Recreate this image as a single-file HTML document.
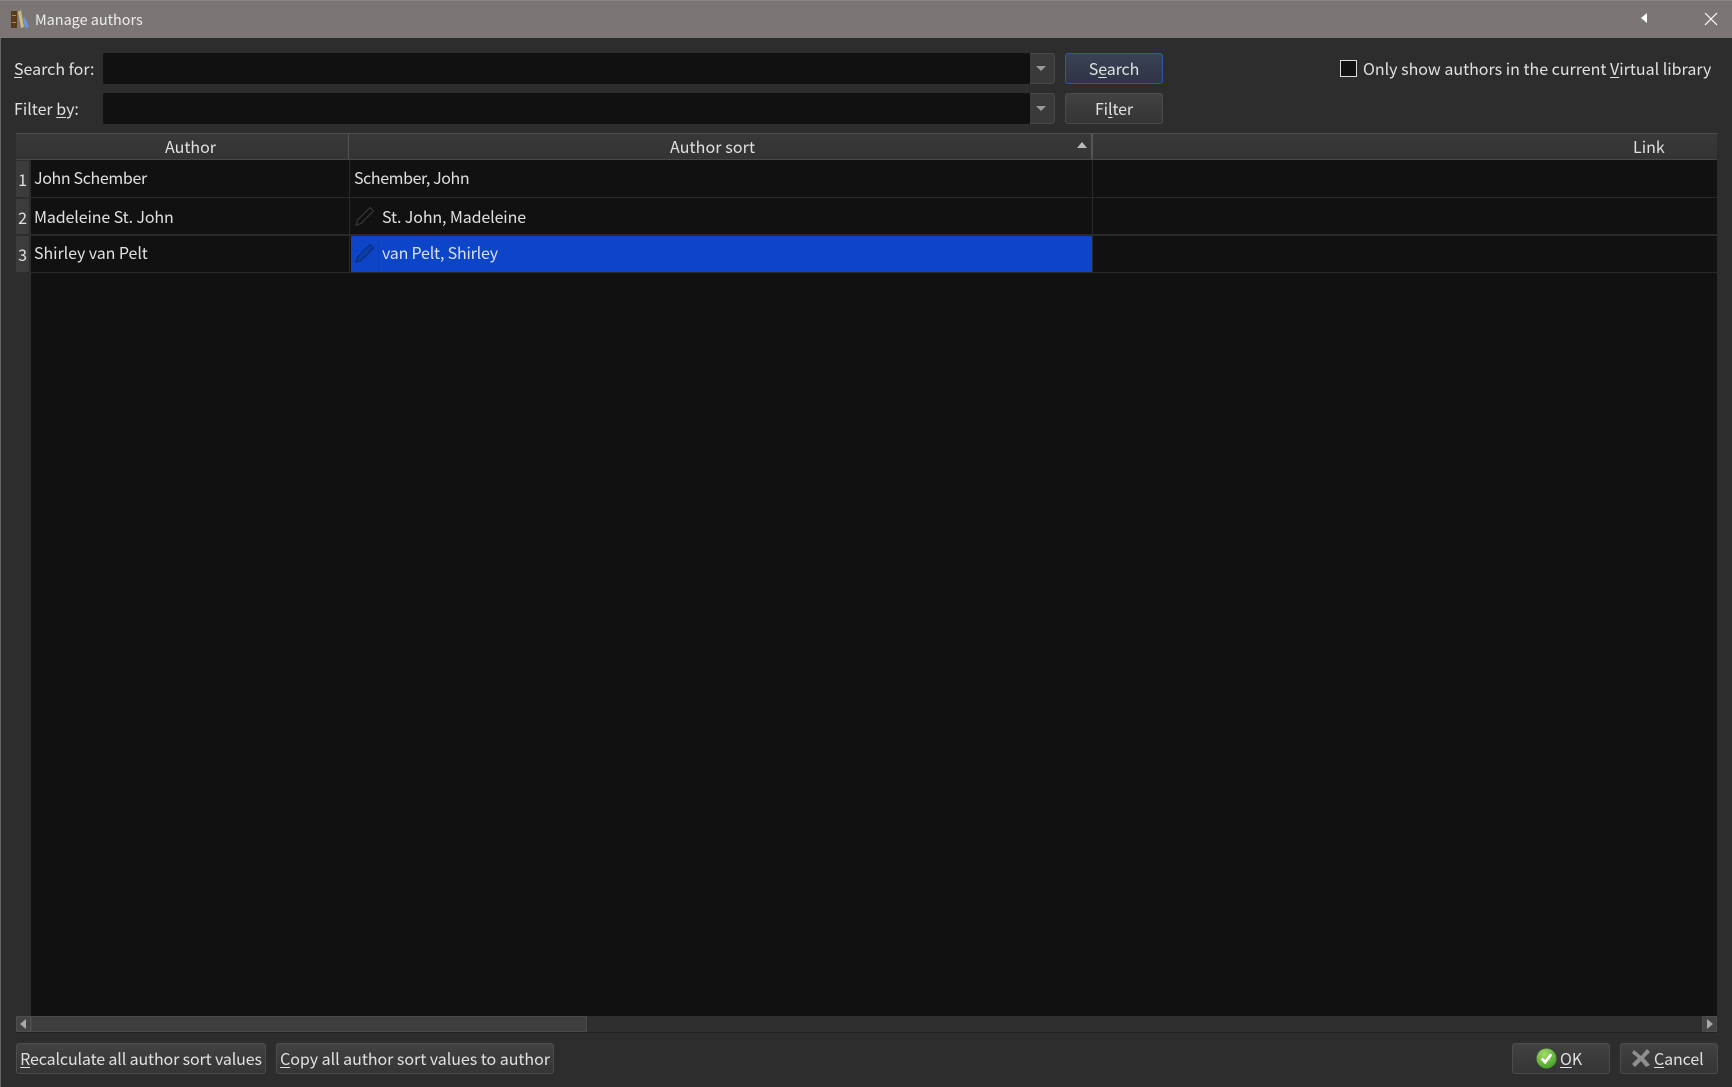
<!DOCTYPE html>
<html><head><meta charset="utf-8"><title>Manage authors</title>
<style>
html,body{margin:0;padding:0;background:#2d2d2d}
body{width:1732px;height:1087px;overflow:hidden;position:relative;font-family:"Noto Sans CJK JP","Liberation Sans",sans-serif;font-size:16px;color:#e0e0e0}
.a{position:absolute}
.t{position:absolute;white-space:nowrap;line-height:24px;height:24px}
.t u{text-underline-offset:2px;text-decoration-thickness:1px}
.btn{position:absolute;box-sizing:border-box;border:1px solid #4c4c4c;border-radius:3px;background:linear-gradient(#424242,#353535);text-align:center;white-space:nowrap;color:#e0e0e0;line-height:29px}
.btn u{text-underline-offset:2px;text-decoration-thickness:1px}
.inp{position:absolute;left:103px;width:927px;height:31px;background:#111;border-radius:2px 0 0 2px}
.dd{position:absolute;left:1030px;width:25px;height:31px;box-sizing:border-box;border:1px solid #4a4a4a;border-left:0;border-radius:0 3px 3px 0;background:#3a3a3a}
.dd:after{content:"";position:absolute;left:6px;top:12px;border:5px solid transparent;border-top:5px solid #999;border-bottom:0}
.rn{position:absolute;left:16px;width:13px;background:#3c3c3c;color:#e0e0e0;text-align:right;box-sizing:border-box}
.line{position:absolute;background:#2a2a2a}
</style></head>
<body>
<div class="a" style="left:0;top:0;width:1732px;height:38px;background:#7b7574"></div>
<div class="a" style="left:0;top:0;width:1732px;height:1px;background:#8c8787"></div>
<div class="a" style="left:0;top:38px;width:1px;height:1049px;background:#666"></div>
<svg class="a" style="left:10px;top:9px" width="20" height="21" viewBox="0 0 20 21">
<rect x="1" y="2" width="6" height="17" fill="#5a3a1c"/><rect x="2" y="6" width="4" height="1" fill="#b08a4a"/><rect x="2" y="13" width="4" height="1" fill="#b08a4a"/>
<path d="M8 3l3-2 3 17-3 1z" fill="#cdbb80"/><path d="M13 9l2-1 4 10-4 1z" fill="#6a94dc"/></svg>
<div class="t" style="left:35px;top:8px;font-size:14.4px;color:#eee">Manage authors</div>
<div class="a" style="left:1641px;top:13px;border:5px solid transparent;border-right:6px solid #fff;border-left:0;height:0"></div>
<svg class="a" style="left:1704px;top:12px" width="14" height="14" viewBox="0 0 14 14"><path d="M1 1l12 12M13 1L1 13" stroke="#fff" stroke-width="1.2" fill="none"/></svg>

<div class="t" style="left:14px;top:56px">Search for:</div>
<div class="a" style="left:14px;top:77px;width:8px;height:1px;background:#ddd"></div>
<div class="t" style="left:14px;top:96px">Filter <u>b</u>y:</div>
<div class="inp" style="top:53px"></div><div class="dd" style="top:53px"></div>
<div class="inp" style="top:93px"></div><div class="dd" style="top:93px"></div>
<div class="btn" style="left:1065px;top:53px;width:98px;height:31px;border-color:#2f56a8;background:linear-gradient(#3a4256,#2f3545);letter-spacing:-.1px">S<u>e</u>arch</div>
<div class="btn" style="left:1065px;top:93px;width:98px;height:31px;letter-spacing:-.1px">Fi<u>l</u>ter</div>
<div class="a" style="left:1340px;top:60px;width:17px;height:17px;box-sizing:border-box;border:1.5px solid #ddd;background:#111"></div>
<div class="t" style="left:1363px;top:56px">Only show authors in the current <u>V</u>irtual library</div>

<div class="a" style="left:31px;top:160px;width:1686px;height:856px;background:#111"></div>
<div class="a" style="left:16px;top:133px;width:1701px;height:27px;background:linear-gradient(#383838,#343434);border-top:1px solid #505050;border-bottom:1px solid #484848;box-sizing:border-box"></div>
<div class="a" style="left:348px;top:134px;width:1px;height:25px;background:#555"></div>
<div class="a" style="left:1091px;top:134px;width:2px;height:25px;background:#555"></div>
<div class="t" style="left:165px;top:134px">Author</div>
<div class="t" style="left:670px;top:134px;letter-spacing:.1px">Author sort</div>
<div class="t" style="left:1633px;top:134px">Link</div>
<div class="a" style="left:1077px;top:142px;border:5px solid transparent;border-bottom:6px solid #bbb;border-top:0;width:0;height:0"></div>

<div class="rn" style="top:161px;height:36px;line-height:37px;padding-right:2px">1</div>
<div class="rn" style="top:199px;height:35px;line-height:36px;padding-right:2px">2</div>
<div class="rn" style="top:236px;height:36px;line-height:37px;padding-right:2px">3</div>
<div class="line" style="left:31px;top:197px;width:1686px;height:1px"></div>
<div class="line" style="left:31px;top:234px;width:1686px;height:2px"></div>
<div class="line" style="left:31px;top:272px;width:1686px;height:1px"></div>
<div class="line" style="left:349px;top:160px;width:1px;height:112px"></div>
<div class="line" style="left:1092px;top:160px;width:1px;height:112px"></div>

<div class="a" style="left:351px;top:236px;width:741px;height:36px;background:#0d45c8"></div>
<div class="a" style="left:378px;top:236px;width:1px;height:36px;background:#0c40bb"></div>
<div class="t" style="left:34px;top:165px;letter-spacing:-.35px">John Schember</div>
<div class="t" style="left:34px;top:204px;letter-spacing:-.12px">Madeleine St. John</div>
<div class="t" style="left:34px;top:240px;letter-spacing:-.06px">Shirley van Pelt</div>
<div class="t" style="left:354px;top:165px;letter-spacing:-.4px">Schember, John</div>
<div class="t" style="left:382px;top:204px;letter-spacing:-.12px">St. John, Madeleine</div>
<div class="t" style="left:382px;top:240px;letter-spacing:-.2px;color:#d6e0f5">van Pelt, Shirley</div>
<svg class="a" style="left:355px;top:206px" width="20" height="20" viewBox="0 0 20 20"><path d="M1 19l1.5-5L15 1.5l3.5 3.5L6 17.5z" fill="none" stroke="#333" stroke-width="1.3"/></svg>
<svg class="a" style="left:355px;top:243px" width="20" height="20" viewBox="0 0 20 20"><path d="M1 19l1.5-5L15 1.5l3.5 3.5L6 17.5z" fill="#0d3ea8" stroke="#0a2f85" stroke-width="1.3"/></svg>

<div class="a" style="left:16px;top:1016px;width:1701px;height:17px;background:#2f2f2f;border-bottom:1px solid #222;box-sizing:border-box"></div>
<div class="a" style="left:31px;top:1016px;width:556px;height:16px;background:#3e3e3e;border:1px solid #4a4a4a;box-sizing:border-box"></div>
<div class="a" style="left:16px;top:1016px;width:15px;height:16px;background:#444;border:1px solid #4d4d4d;box-sizing:border-box"></div>
<div class="a" style="left:1702px;top:1016px;width:15px;height:16px;background:#444;border:1px solid #4d4d4d;box-sizing:border-box"></div>
<div class="a" style="left:20px;top:1019px;border:5px solid transparent;border-right:6px solid #aaa;border-left:0;width:0;height:0"></div>
<div class="a" style="left:1707px;top:1019px;border:5px solid transparent;border-left:6px solid #aaa;border-right:0;width:0;height:0"></div>

<div class="btn" style="left:16px;top:1043px;width:250px;height:31px;letter-spacing:-.13px"><u>R</u>ecalculate all author sort values</div>
<div class="btn" style="left:276px;top:1043px;width:278px;height:31px;letter-spacing:-.03px"><u>C</u>opy all author sort values to author</div>
<div class="btn" style="left:1512px;top:1043px;width:98px;height:31px"></div>
<div class="btn" style="left:1620px;top:1043px;width:98px;height:31px"></div>
<svg class="a" style="left:1536px;top:1048px" width="21" height="21" viewBox="0 0 20 20"><defs><radialGradient id="g" cx=".4" cy=".3" r=".8"><stop offset="0" stop-color="#a5dc6a"/><stop offset="1" stop-color="#3a9a1e"/></radialGradient></defs><circle cx="10" cy="10" r="9.5" fill="url(#g)"/><path d="M5.5 10l3.2 3.5L14.5 6" fill="none" stroke="#fff" stroke-width="2.6"/></svg>
<div class="t" style="left:1560px;top:1046px"><u>O</u>K</div>
<svg class="a" style="left:1631px;top:1048px" width="20" height="20" viewBox="0 0 20 20"><path d="M3 2l7 6 6-7 3 3-6 6 6 7-4 2-5-6-6 6-3-3 6-6-6-5z" fill="#8f8f8f"/></svg>
<div class="t" style="left:1654px;top:1046px;letter-spacing:-.1px"><u>C</u>ancel</div>
</body></html>
